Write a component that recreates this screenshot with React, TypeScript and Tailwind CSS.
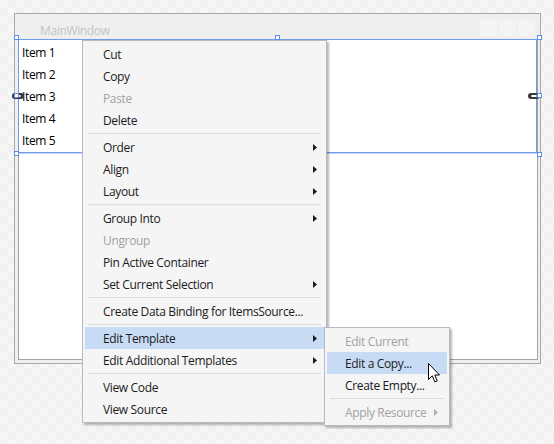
import clsx from "clsx";

type MenuEntry =
  | { sep: true }
  | { label: string; disabled?: boolean; arrow?: boolean; active?: boolean; sep?: false };

const mainMenu: MenuEntry[] = [
  { label: "Cut" },
  { label: "Copy" },
  { label: "Paste", disabled: true },
  { label: "Delete" },
  { sep: true },
  { label: "Order", arrow: true },
  { label: "Align", arrow: true },
  { label: "Layout", arrow: true },
  { sep: true },
  { label: "Group Into", arrow: true },
  { label: "Ungroup", disabled: true },
  { label: "Pin Active Container" },
  { label: "Set Current Selection", arrow: true },
  { sep: true },
  { label: "Create Data Binding for ItemsSource..." },
  { sep: true },
  { label: "Edit Template", arrow: true, active: true },
  { label: "Edit Additional Templates", arrow: true },
  { sep: true },
  { label: "View Code" },
  { label: "View Source" },
];

const subMenu: MenuEntry[] = [
  { label: "Edit Current", disabled: true },
  { label: "Edit a Copy...", active: true },
  { label: "Create Empty..." },
  { sep: true },
  { label: "Apply Resource", arrow: true, disabled: true },
];

function Arrow({ disabled }: { disabled?: boolean }) {
  return (
    <svg width="4" height="7" viewBox="0 0 4 7" className="shrink-0">
      <path d="M0 0 L4 3.5 L0 7 Z" fill={disabled ? "#b0b0b0" : "#1a1a1a"} />
    </svg>
  );
}

function Menu({ items, arrowPad }: { items: MenuEntry[]; arrowPad: string }) {
  return (
    <div className="px-[2px] pt-[2px] pb-[2px]">
      {items.map((it, i) =>
        it.sep ? (
          <div key={i} className="h-[5px] flex items-center px-[3px]">
            <div className="h-px w-full bg-[#dcdcdc]" />
          </div>
        ) : (
          <div
            key={i}
            className={clsx(
              "h-[22px] flex items-center pl-[18px]",
              arrowPad,
              it.active && "bg-[#c7dcf4]",
              it.disabled ? "text-[#a2a2a2]" : "text-[#1b1b1b]"
            )}
          >
            <span className="flex-1 whitespace-nowrap pt-[2px]">{it.label}</span>
            {it.arrow && <Arrow disabled={it.disabled} />}
          </div>
        )
      )}
    </div>
  );
}

function Handle({ cls }: { cls: string }) {
  return <div className={clsx("absolute w-[5px] h-[5px] border border-[#5b8ee6] bg-white", cls)} />;
}

function Link({ cls }: { cls: string }) {
  return (
    <div className={clsx("absolute w-[12px] h-[6px] rounded-[3px] bg-[#3a3a3a] flex items-center justify-center", cls)}>
      <div className="w-[6px] h-[2px] rounded-[1px] border border-white" />
    </div>
  );
}

export default function App() {
  return (
    <div className="relative w-[554px] h-[444px] overflow-hidden bg-[repeating-conic-gradient(#f1f1f1_0%_25%,#f7f7f7_0%_50%)] bg-[length:16px_16px] font-['Segoe_UI','Open_Sans',sans-serif] text-[12px] leading-[16px] tracking-[-0.35px]">
      <div className="pt-[13px] pl-[14px]">
        <div className="w-[527px] h-[351px] border border-[#a9a9a9] bg-[#efefef] flex flex-col">
          <div className="h-[25px] flex items-start justify-between">
            <span className="pl-[25px] pt-[9px] text-[#c3c3c3]">MainWindow</span>
            <div className="flex gap-[2px] pt-[6px] pr-[5px]">
              <div className="w-[17px] h-[16px] bg-[#f4f4f4]" />
              <div className="w-[17px] h-[16px] bg-[#f4f4f4]" />
              <div className="w-[17px] h-[16px] bg-[#f4f4f4]" />
            </div>
          </div>
          <div className="ml-[3px] mr-[2px] mb-[3px] flex-1 border border-[#a3a3a3] bg-white">
            <div className="h-[113px] border-b border-[#6f9be8] shadow-[0_1px_0_#c5d6f5] pt-[1px] pl-[3px] text-black">
              {["Item 1", "Item 2", "Item 3", "Item 4", "Item 5"].map((t) => (
                <div key={t} className="h-[22px] flex items-center pt-[2px]">
                  {t}
                </div>
              ))}
            </div>
          </div>
        </div>
      </div>

      {/* selection adorner */}
      <div className="absolute left-[18px] top-[39px] w-[519px] h-[114px] border border-[#6f9be8]" />
      <Link cls="left-[12px] top-[93px]" />
      <Link cls="left-[528px] top-[93px]" />
      <Handle cls="left-[14px] top-[35px]" />
      <Handle cls="left-[275px] top-[35px]" />
      <Handle cls="left-[537px] top-[35px]" />
      <Handle cls="left-[14px] top-[93px]" />
      <Handle cls="left-[537px] top-[93px]" />
      <Handle cls="left-[14px] top-[151px]" />
      <Handle cls="left-[537px] top-[152px]" />

      {/* context menu */}
      <div className="absolute left-[82px] top-[40px] w-[245px] bg-[#f5f5f5] border border-[#b9b9c6] shadow-[2px_2px_2px_rgba(0,0,0,0.28)]">
        <Menu items={mainMenu} arrowPad="pr-[7px]" />
      </div>

      {/* submenu */}
      <div className="absolute left-[324px] top-[327px] w-[126px] bg-[#f5f5f5] border border-[#b9b9c6] shadow-[2px_2px_2px_rgba(0,0,0,0.28)]">
        <Menu items={subMenu} arrowPad="pr-[9px]" />
      </div>

      {/* mouse cursor */}
      <svg className="absolute left-[428px] top-[363px]" width="13" height="21" viewBox="0 0 13 21">
        <path
          d="M0.5 0.5 L0.5 16.5 L4.3 12.8 L6.8 18.8 L9.2 17.8 L6.8 12 L11.5 12 Z"
          fill="#fff"
          stroke="#000"
          strokeWidth="1"
          strokeLinejoin="miter"
        />
      </svg>
    </div>
  );
}
